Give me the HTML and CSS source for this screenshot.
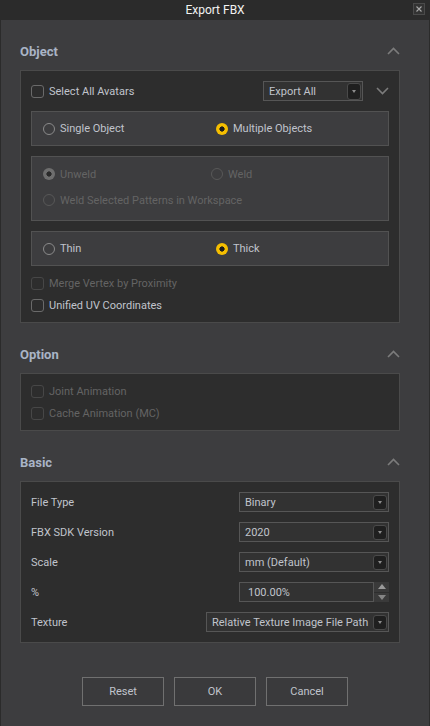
FILE: index.html
```html
<!DOCTYPE html>
<html>
<head>
<meta charset="utf-8">
<title>Export FBX</title>
<link rel="stylesheet" href="styles.css">
</head>
<body>
<div class="window">
  <div class="titlebar">
    <span></span>
    <span class="title">Export FBX</span>
    <span class="close">
      <svg width="12" height="12" viewBox="0 0 12 12"><rect x="0.5" y="0.5" width="11" height="11" fill="#333" stroke="#4a4a4a"/><path d="M3.5 3.5 L8.5 8.5 M8.5 3.5 L3.5 8.5" stroke="#a8a8a8" stroke-width="1.1"/></svg>
    </span>
  </div>

  <div class="content">
    <section class="section">
      <div class="sec-head">
        <span class="sec-title">Object</span>
        <svg class="chev" width="13" height="8" viewBox="0 0 13 8"><polyline points="1,7 6.5,1.5 12,7" fill="none" stroke="#7c7c7c" stroke-width="1.6"/></svg>
      </div>
      <div class="panel panel-object">
        <div class="row-top">
          <label class="check"><span class="box"></span><span>Select All Avatars</span></label>
          <div class="combo combo-export"><span class="combo-text">Export All</span><span class="arrow-btn"><span class="tri"></span></span></div>
          <svg class="chev-down" width="13" height="8" viewBox="0 0 13 8"><polyline points="1,1 6.5,6.5 12,1" fill="none" stroke="#7c7c7c" stroke-width="1.6"/></svg>
        </div>

        <div class="subpanel radios">
          <label class="radio-item col-a"><span class="radio"></span>Single Object</label>
          <label class="radio-item"><span class="radio on"></span>Multiple Objects</label>
        </div>

        <div class="subpanel weld disabled">
          <div class="weld-row">
            <label class="radio-item col-b"><span class="radio dis-on"></span>Unweld</label>
            <label class="radio-item"><span class="radio"></span>Weld</label>
          </div>
          <div class="weld-row">
            <label class="radio-item"><span class="radio"></span>Weld Selected Patterns in Workspace</label>
          </div>
        </div>

        <div class="subpanel radios">
          <label class="radio-item col-a"><span class="radio"></span>Thin</label>
          <label class="radio-item"><span class="radio on"></span>Thick</label>
        </div>

        <div class="checks checks-object">
          <label class="check disabled"><span class="box"></span><span>Merge Vertex by Proximity</span></label>
          <label class="check"><span class="box"></span><span>Unified UV Coordinates</span></label>
        </div>
      </div>
    </section>

    <section class="section">
      <div class="sec-head">
        <span class="sec-title">Option</span>
        <svg class="chev" width="13" height="8" viewBox="0 0 13 8"><polyline points="1,7 6.5,1.5 12,7" fill="none" stroke="#7c7c7c" stroke-width="1.6"/></svg>
      </div>
      <div class="panel panel-option">
        <label class="check disabled"><span class="box"></span><span>Joint Animation</span></label>
        <label class="check disabled"><span class="box"></span><span>Cache Animation (MC)</span></label>
      </div>
    </section>

    <section class="section">
      <div class="sec-head">
        <span class="sec-title">Basic</span>
        <svg class="chev" width="13" height="8" viewBox="0 0 13 8"><polyline points="1,7 6.5,1.5 12,7" fill="none" stroke="#7c7c7c" stroke-width="1.6"/></svg>
      </div>
      <div class="panel panel-basic">
        <div class="form-row">
          <span class="label">File Type</span>
          <div class="combo combo-w"><span class="combo-text">Binary</span><span class="arrow-btn"><span class="tri"></span></span></div>
        </div>
        <div class="form-row">
          <span class="label">FBX SDK Version</span>
          <div class="combo combo-w"><span class="combo-text">2020</span><span class="arrow-btn"><span class="tri"></span></span></div>
        </div>
        <div class="form-row">
          <span class="label">Scale</span>
          <div class="combo combo-w"><span class="combo-text">mm (Default)</span><span class="arrow-btn"><span class="tri"></span></span></div>
        </div>
        <div class="form-row">
          <span class="label">%</span>
          <div class="spin">
            <div class="spin-field">100.00%</div>
            <div class="spin-btns"><span class="up"></span><span class="down"></span></div>
          </div>
        </div>
        <div class="form-row">
          <span class="label">Texture</span>
          <div class="combo combo-tex"><span class="combo-text">Relative Texture Image File Path</span><span class="arrow-btn"><span class="tri"></span></span></div>
        </div>
      </div>
    </section>
  </div>

  <div class="footer">
    <button class="btn">Reset</button>
    <button class="btn">OK</button>
    <button class="btn">Cancel</button>
  </div>
</div>
</body>
</html>
```

FILE: styles.css
```css
* { box-sizing: border-box; }
html, body { margin: 0; padding: 0; background: #3d3d3f; }
body {
  font-family: Roboto, "Liberation Sans", Arial, sans-serif;
  font-size: 11px;
  color: #c0c4cc;
}
.window {
  width: 430px;
  height: 726px;
  display: flex;
  flex-direction: column;
  background: #3d3d3f;
  border-left: 1px solid #2b2b2b;
  border-right: 1px solid #2b2b2b;
}
.titlebar {
  height: 20px;
  flex: none;
  background: #2b2b2b;
  display: grid;
  grid-template-columns: 1fr auto 1fr;
  align-items: center;
  margin: 0 -1px;
}
.title {
  color: #f2f2f2;
  font-size: 12px;
  line-height: 20px;
}
.close {
  justify-self: end;
  margin-right: 5px;
  display: flex;
  margin-top: -2px;
}
.content {
  padding: 0 29px 0 19px;
  display: flex;
  flex-direction: column;
}
.section { margin-top: 21px; }
.sec-head {
  height: 20px;
  display: flex;
  align-items: center;
  justify-content: space-between;
  margin-bottom: 9px;
}
.sec-title {
  font-weight: bold;
  font-size: 13px;
  color: #a9b4c6;
}
.chev { display: block; margin-top: -1px; }

.panel {
  background: #2d2d2d;
  border: 1px solid #4a4a4a;
}
.panel-object {
  padding: 10px 10px 7px 10px;
  display: flex;
  flex-direction: column;
}
.row-top {
  height: 20px;
  display: flex;
  align-items: center;
}
.row-top .check { flex: 1; }
.check {
  display: flex;
  align-items: center;
  height: 20px;
  color: #c0c4cc;
}
.check .box {
  width: 13px;
  height: 13px;
  border: 1px solid #6a6a6a;
  border-radius: 3px;
  margin-right: 5px;
  flex: none;
}
.check.disabled { color: #646464; }
.check.disabled .box { border-color: #474747; }

.combo {
  height: 20px;
  border: 1px solid #565656;
  background: #323232;
  display: flex;
  align-items: center;
  padding-left: 5px;
  padding-right: 1px;
  color: #c0c4cc;
}
.combo-text { flex: 1; white-space: nowrap; padding-top: 1px; }
.combo-export { width: 100px; }
.combo-export .arrow-btn { height: 17px; }
.arrow-btn {
  width: 14px;
  height: 15px;
  background: #1f1f1f;
  border: 1px solid #4a4a4a;
  border-radius: 3px;
  display: flex;
  align-items: center;
  justify-content: center;
  flex: none;
}
.tri {
  width: 0;
  height: 0;
  border-left: 2.5px solid transparent;
  border-right: 2.5px solid transparent;
  border-top: 3px solid #8c8c8c;
}
.chev-down { margin-left: 13px; display: block; }

.subpanel {
  background: #3d3d3f;
  border: 1px solid #525252;
  margin-top: 10px;
}
.radios {
  height: 35px;
  display: flex;
  align-items: center;
  padding-left: 11px;
}
.radio-item {
  display: flex;
  align-items: center;
  height: 20px;
  white-space: nowrap;
}
.col-a { width: 173px; }
.col-b { width: 168px; }
.radio {
  width: 12px;
  height: 12px;
  border-radius: 50%;
  border: 1.5px solid #8a8a8a;
  margin-right: 5px;
  flex: none;
}
.radio.on {
  border: none;
  background: radial-gradient(circle, #1c1c1c 0 2.3px, #f5be00 2.9px);
}
.weld {
  height: 65px;
  padding: 7px 0 0 11px;
  display: flex;
  flex-direction: column;
  gap: 6px;
  color: #646464;
}
.weld-row { display: flex; }
.weld .radio { border-color: #585858; }
.weld .radio.dis-on {
  border: none;
  background: radial-gradient(circle, #2a2a2a 0 2.3px, #6e6e6e 2.9px);
}
.checks {
  display: flex;
  flex-direction: column;
  gap: 2px;
}
.checks-object { margin-top: 7px; }

.panel-option {
  padding: 7px 10px 7px 10px;
  display: flex;
  flex-direction: column;
  gap: 2px;
}

.panel-basic {
  padding: 10px;
  display: flex;
  flex-direction: column;
  gap: 10px;
}
.form-row {
  height: 20px;
  display: flex;
  align-items: center;
  justify-content: space-between;
}
.label { color: #c0c4cc; padding-top: 1px; }
.combo-w { width: 150px; }
.combo-tex { width: 183px; }
.spin {
  width: 150px;
  height: 20px;
  display: flex;
}
.spin-field {
  width: 135px;
  height: 20px;
  border: 1px solid #565656;
  background: #323232;
  padding-left: 8px;
  line-height: 19px;
  color: #c0c4cc;
}
.spin-btns {
  width: 15px;
  display: flex;
  flex-direction: column;
  background: #3a3a3a;
}
.spin-btns span {
  flex: 1;
  display: flex;
  align-items: center;
  justify-content: center;
}
.spin-btns .up { border-bottom: 1px solid #2e2e2e; }
.spin-btns .up::before {
  content: "";
  border-left: 4px solid transparent;
  border-right: 4px solid transparent;
  border-bottom: 5px solid #9a9a9a;
}
.spin-btns .down::before {
  content: "";
  border-left: 4px solid transparent;
  border-right: 4px solid transparent;
  border-top: 5px solid #858585;
}

.footer {
  margin-top: 34px;
  display: flex;
  justify-content: center;
  gap: 10px;
}
.btn {
  width: 82px;
  height: 29px;
  background: #3a3a3c;
  border: 1px solid #707070;
  color: #c0c4cc;
  font-family: Roboto, "Liberation Sans", Arial, sans-serif;
  font-size: 11px;
  padding: 0;
}
```
